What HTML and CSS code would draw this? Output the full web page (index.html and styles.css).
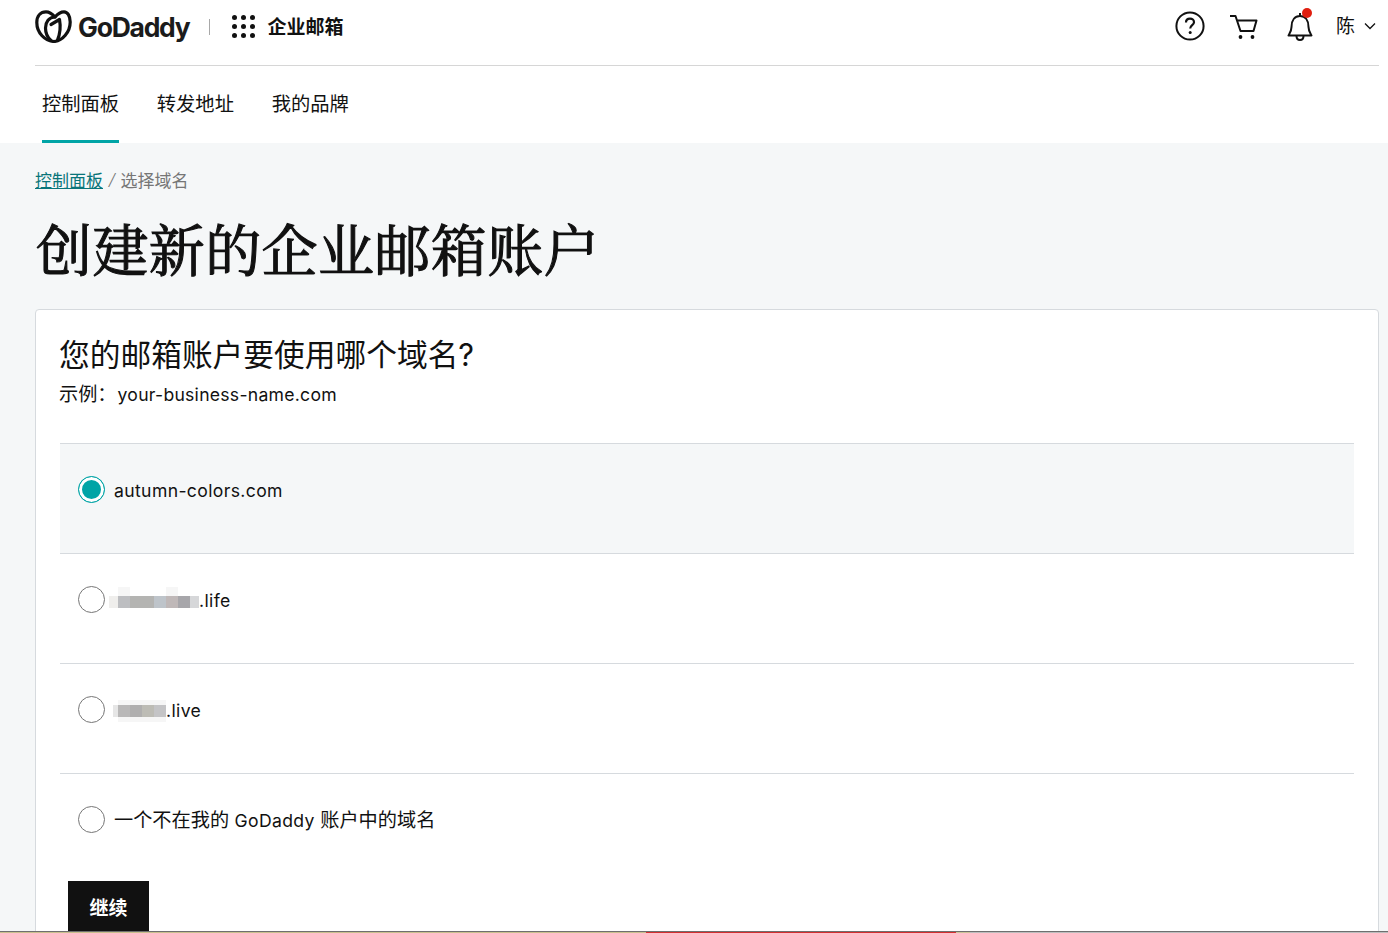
FILE: index.html
```html
<!DOCTYPE html>
<html lang="zh-CN">
<head>
<meta charset="utf-8">
<title>创建新的企业邮箱账户</title>
<link rel="stylesheet" href="styles.css">
</head>
<body>
<header class="site-header">
  <div class="topbar">
    <div class="brand">
      <svg class="logo-mark" viewBox="0 0 37 33" width="37" height="33" fill="none" stroke="#111" stroke-width="3.200" stroke-linecap="round" stroke-linejoin="round" aria-hidden="true">
        <path d="M19 31.500C10 31 1.800 23 1.800 12.500 1.800 6 5.500 1.800 11 1.800 14 1.800 17 3.500 20 7 23 3.500 26 1.800 29 1.800 32.500 1.800 35.200 6 35.200 12 35.200 22 27.500 31 19 31.500Z"/>
        <path d="M20 7C14 7 10.500 12 10.500 18 10.500 23 12.500 27.500 16 30.500"/>
        <path d="M16 14.500 24.500 9.500C25.500 15 25 24 22.500 30"/>
      </svg>
      <span class="logo-text">GoDaddy</span>
      <span class="brand-sep"></span>
      <span class="dots" aria-hidden="true"><i></i><i></i><i></i><i></i><i></i><i></i><i></i><i></i><i></i></span>
      <span class="product">企业邮箱</span>
    </div>
    <div class="tools">
      <svg class="tool tool-help" viewBox="0 0 30 30" width="30" height="30" aria-hidden="true">
        <circle cx="15" cy="15" r="13.600" fill="none" stroke="#111" stroke-width="2"/>
        <path d="M11 11.500C11 9 12.800 7.700 15 7.700 17.300 7.700 19 9.200 19 11.200 19 14 15.200 14.300 15.200 17.500" fill="none" stroke="#111" stroke-width="2.200"/>
        <circle cx="15.200" cy="21.500" r="1.500" fill="#111"/>
      </svg>
      <svg class="tool tool-cart" viewBox="0 0 28 26" width="28" height="26" aria-hidden="true">
        <path d="M0 2H5.500L10.500 17H23.500L26.500 6.500H7" fill="none" stroke="#111" stroke-width="2" stroke-linejoin="round"/>
        <circle cx="10.500" cy="23" r="1.900" fill="#111"/>
        <circle cx="22.500" cy="23" r="1.900" fill="#111"/>
      </svg>
      <span class="bell">
        <svg viewBox="0 0 26 32" width="26" height="32" aria-hidden="true">
          <path d="M13 3V6M4.500 17C4.500 10 8 6 13 6 18 6 21.500 10 21.500 17 21.500 21 23 23 24.500 25.500H1.500C3 23 4.500 21 4.500 17Z" fill="none" stroke="#111" stroke-width="2" stroke-linejoin="round"/>
          <path d="M9.500 26C9.500 28.500 11 30 13 30 15 30 16.500 28.500 16.500 26" fill="none" stroke="#111" stroke-width="2"/>
        </svg>
        <span class="bell-dot"></span>
      </span>
      <span class="user">陈</span>
      <svg class="chev" viewBox="0 0 12 8" width="12" height="8" aria-hidden="true"><path d="M1 1.500 6 6.500 11 1.500" fill="none" stroke="#111" stroke-width="1.300"/></svg>
    </div>
  </div>
  <nav class="tabs">
    <a class="tab tab-active">控制面板</a>
    <a class="tab">转发地址</a>
    <a class="tab">我的品牌</a>
  </nav>
</header>
<main class="content">
  <div class="crumbs"><a class="crumb-link">控制面板</a><span class="crumb-sep">/</span><span class="crumb-current">选择域名</span></div>
  <h1 class="page-title">创建新的企业邮箱账户</h1>
  <section class="card">
    <h2 class="card-title">您的邮箱账户要使用哪个域名?</h2>
    <p class="card-sub">示例&#xFF1A;<span class="latin latin-sub">your-business-name.com</span></p>
    <div class="options">
      <div class="option option-selected">
        <span class="radio radio-on"></span>
        <span class="label"><span class="latin">autumn-colors.com</span></span>
      </div>
      <div class="option">
        <span class="radio"></span>
        <span class="label label-hidden">
          <span class="blur blur-a"><i class="p1"></i><i class="p2"></i><i class="p3"></i><i class="p4"></i><i class="p5"></i><i class="p6"></i><i class="p7"></i></span><span class="latin">.life</span>
        </span>
      </div>
      <div class="option">
        <span class="radio"></span>
        <span class="label label-hidden">
          <span class="blur blur-b"><i class="q1"></i><i class="q2"></i><i class="q3"></i><i class="q4"></i><i class="q5"></i></span><span class="latin">.live</span>
        </span>
      </div>
      <div class="option option-last">
        <span class="radio"></span>
        <span class="label">一个不在我的 <span class="latin">GoDaddy</span> 账户中的域名</span>
      </div>
    </div>
    <button class="continue" type="button">继续</button>
  </section>
</main>
<div class="edge-strip" aria-hidden="true"><i class="s1"></i><i class="s2"></i><i class="s3"></i><i class="s4"></i></div>
</body>
</html>
```
FILE: styles.css
```css
* { box-sizing: border-box; }
html, body { margin: 0; height: 100%; overflow: hidden; }
body {
  position: relative;
  background: #f5f7f8;
  color: #111;
  font-family: Inter, "Noto Sans CJK SC", sans-serif;
}
.latin { font-size: 17.600px; letter-spacing: .36px; }
.latin-sub { letter-spacing: .26px; }
.site-header { background: #fff; padding: 0 9px 0 35px; height: 143px; }
.topbar {
  height: 66px;
  border-bottom: 1px solid #d6d6d6;
  display: flex;
  justify-content: space-between;
  align-items: flex-start;
}
.brand { display: flex; align-items: center; padding-top: 10px; height: 43px; }
.logo-mark { display: block; flex: none; }
.logo-text {
  font-family: Inter, sans-serif;
  font-weight: 700;
  font-size: 26.500px;
  letter-spacing: -1.250px;
  margin-left: 6px;
  padding-top: 2px;
  line-height: 33px;
  color: #1b1b1b;
}
.brand-sep { width: 1px; height: 16px; background: #a8a8a8; margin-left: 19px; }
.dots { display: grid; grid-template-columns: repeat(3, 5px); gap: 4px 4px; margin-left: 22px; }
.dots i { width: 5px; height: 5px; border-radius: 50%; background: #111; }
.product { font-size: 19px; font-weight: 700; margin-left: 13px; padding-top: 2px; line-height: 35px; }
.tools { display: flex; align-items: flex-start; }
.tool { display: block; flex: none; }
.tool-help { margin-top: 11px; }
.tool-cart { margin-top: 14px; margin-left: 25px; }
.bell { position: relative; display: block; width: 26px; height: 32px; margin-top: 10px; margin-left: 29px; }
.bell svg { display: block; }
.bell-dot { position: absolute; top: -2px; left: 15px; width: 10px; height: 10px; border-radius: 50%; background: #e01e0f; }
.user { font-size: 19px; line-height: 28px; margin-top: 13px; margin-left: 23px; }
.chev { margin-top: 22px; margin-left: 9px; margin-right: 3px; }
.tabs { display: flex; gap: 37.700px; padding-left: 7px; height: 77px; }
.tab { display: block; font-size: 19.300px; line-height: 28px; padding-top: 24px; height: 77px; color: #111; }
.tab-active { border-bottom: 3px solid #00a4a6; }
.content { padding: 0 9px 0 35px; }
.crumbs { display: flex; align-items: baseline; padding-top: 25px; height: 60px; font-size: 17px; line-height: 25px; }
.crumb-link { color: #09757a; text-decoration: underline; }
.crumb-sep { color: #767676; margin: 0 6px 0 6px; font-family: "Liberation Serif", serif; font-style: italic; font-size: 20px; }
.crumb-current { color: #767676; }
.page-title {
  margin: 8px 0 0 1px;
  font-family: "Noto Serif CJK SC", "Noto Sans CJK SC", serif;
  font-size: 56px;
  font-weight: 400;
  -webkit-text-stroke: 1.100px #111;
  letter-spacing: .4px;
  line-height: 72px;
  color: #111;
}
.card {
  margin-top: 26px;
  height: 700px;
  background: #fff;
  border: 1px solid #d6dade;
  border-radius: 4px;
  padding: 24px 24px 0;
}
.card-title { margin: 0 0 0 -1px; font-size: 30.720px; font-weight: 400; line-height: 42px; }
.card-sub { margin: 5px 0 0 -1px; font-size: 19.200px; line-height: 26px; }
.latin-sub { margin-left: 1px; }
.options { margin-top: 35px; }
.option {
  height: 110px;
  border-top: 1px solid #d6dade;
  padding: 31px 0 0 18px;
  display: flex;
  align-items: flex-start;
  gap: 9px;
}
.option-selected { background: #f5f7f8; }
.option-last { height: 108px; }
.radio { width: 27px; height: 27px; margin-top: 1px; border-radius: 50%; border: 1px solid #767676; background: #fff; flex: none; }
.radio-on {
  border: 1.500px solid #00a4a6;
  background: #00a4a6;
  box-shadow: inset 0 0 0 3px #fff;
}
.label { font-size: 19.200px; line-height: 31px; color: #111; }
.label-hidden { display: flex; align-items: center; line-height: 29px; }
.blur { display: flex; align-items: center; height: 30px; }
.blur-a { margin-left: -5px; padding-top: 4px; }
.blur-b { margin-left: -1px; padding-top: 2px; }
.blur i { display: block; height: 12px; }
.p1 { width: 9px; background: #efeeec; }
.p2 { width: 12px; background: #bdbec1; box-shadow: 0 -9px 0 #f6f6f6; }
.p3 { width: 24px; background: #b4b4b2; }
.p4 { width: 12px; background: #bec4ca; }
.p5 { width: 12px; background: #bfb8b8; box-shadow: 0 -9px 0 #f6f6f6; }
.p6 { width: 12px; background: #a7a6aa; }
.p7 { width: 9px; background: #d6d7d9; }
.q1 { width: 5px; background: #e6e6e6; }
.q2 { width: 12px; background: #b9b8b8; box-shadow: 0 -5px 0 #f6f6f6, 0 5px 0 #f6f6f6; }
.q3 { width: 12px; background: #b0afaf; box-shadow: 0 -5px 0 #f6f6f6, 0 5px 0 #f6f6f6; }
.q4 { width: 12px; background: #bdbcb5; box-shadow: 0 -5px 0 #f6f6f6, 0 5px 0 #f6f6f6; }
.q5 { width: 12px; background: #c4c4c6; box-shadow: 0 -5px 0 #f6f6f6, 0 5px 0 #f6f6f6; }
.continue {
  display: block;
  margin: 0 0 0 8px;
  width: 81px;
  height: 56px;
  background: #111;
  color: #fff;
  border: 0;
  border-radius: 0;
  padding: 0 0 6px;
  font: 700 19px Inter, "Noto Sans CJK SC", sans-serif;
}
.edge-strip {
  position: fixed;
  left: 0;
  right: 0;
  bottom: 0;
  height: 2px;
  border-top: 1px solid #6f6f6f;
  display: flex;
}
.edge-strip i { display: block; height: 1px; }
.s1 { width: 646px; background: #c9bf8e; }
.s2 { width: 310px; background: #d32f2f; }
.s3 { width: 14px; background: #cbc398; }
.s4 { flex: 1; background: #bdbdbd; }
```
